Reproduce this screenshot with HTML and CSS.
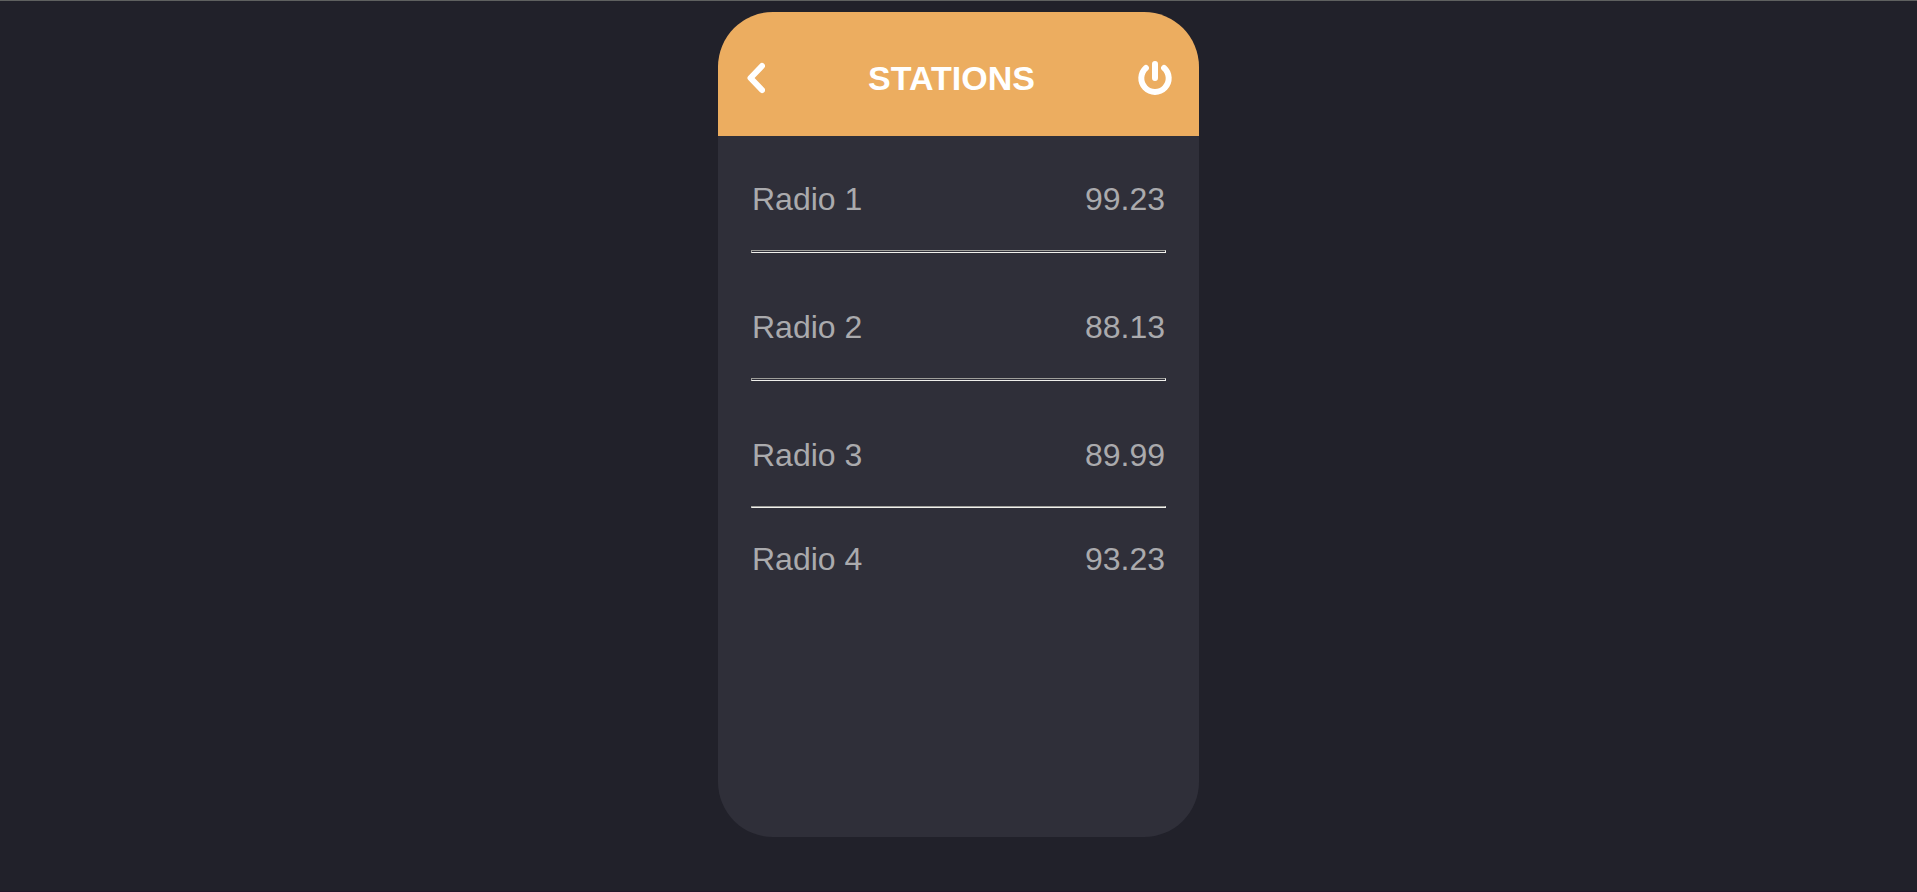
FILE: index.html
```html
<!DOCTYPE html>
<html lang="en">
<head>
<meta charset="utf-8">
<meta name="viewport" content="width=device-width, initial-scale=1">
<title>Stations</title>
<link rel="stylesheet" href="styles.css">
</head>
<body class="page">
<main class="radio">
  <header class="radio-header">
    <button class="icon-button" type="button" aria-label="Back">
      <svg class="icon icon-back" viewBox="0 0 18 34" aria-hidden="true"><path d="M15 5 3.500 17 15 29"/></svg>
    </button>
    <h1 class="title">STATIONS</h1>
    <button class="icon-button" type="button" aria-label="Power">
      <svg class="icon icon-power" viewBox="0 0 34 34" aria-hidden="true"><path d="M7.900 7A13.700 13.700 0 1 0 26.100 7M17 3V17"/></svg>
    </button>
  </header>
  <ul class="stations">
    <li>
      <div class="station"><span>Radio 1</span><span>99.23</span></div>
      <hr class="divider">
    </li>
    <li>
      <div class="station"><span>Radio 2</span><span>88.13</span></div>
      <hr class="divider">
    </li>
    <li>
      <div class="station"><span>Radio 3</span><span>89.99</span></div>
      <hr class="divider divider-last">
    </li>
    <li>
      <div class="station"><span>Radio 4</span><span>93.23</span></div>
    </li>
  </ul>
</main>
</body>
</html>
```
FILE: styles.css
```css
* { box-sizing: border-box; }

.page {
  margin: 0;
  padding: 11px 16px 54px;
  min-height: 100vh;
  border-top: 1px solid #5f6160;
  border-bottom: 1px solid #21182b;
  background: #21212a;
  color: #aaaaad;
  font-family: "Liberation Sans", Arial, sans-serif;
}

.radio {
  max-width: 481px;
  min-height: 825px;
  margin: 0 auto;
  border-radius: 55px;
  overflow: hidden;
  background: #2f2f39;
}

.radio-header {
  display: flex;
  align-items: center;
  justify-content: space-between;
  padding: 46px 27px 38px 29px;
  background: #ecad60;
  color: #fff;
}

.title {
  margin: 0;
  font-size: 34px;
  line-height: 40px;
}

.icon-button {
  display: flex;
  padding: 0;
  border: 0;
  background: none;
  color: inherit;
  cursor: pointer;
}

.icon {
  height: 34px;
  fill: none;
  stroke: currentColor;
  stroke-width: 6;
  stroke-linecap: round;
  stroke-linejoin: round;
}

.icon-back { width: 18px; }
.icon-power { width: 34px; }

.stations {
  margin: 0;
  padding: 45px 33px;
  list-style: none;
}

.station {
  display: flex;
  justify-content: space-between;
  padding: 0 1px;
  font-size: 32px;
  line-height: 36px;
}

.divider {
  height: 3px;
  margin: 33px 0 56px;
  border: 1px solid;
  border-color: #9f9f9b #f0f0ec #f0f0ec #9f9f9b;
}

.divider-last {
  height: 2px;
  margin-bottom: 33px;
}
```
